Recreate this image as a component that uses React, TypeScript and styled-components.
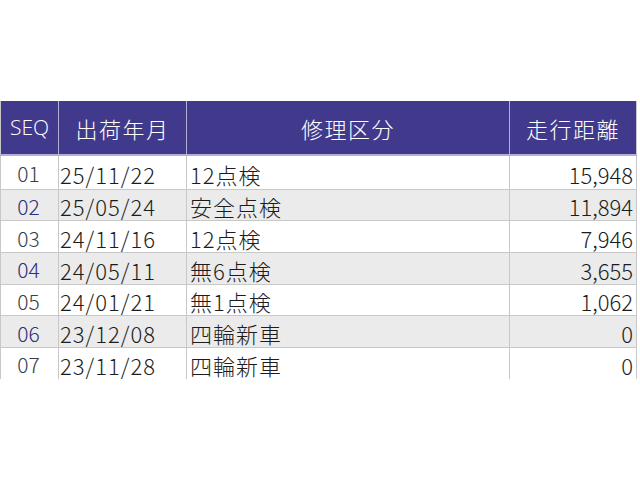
import React from "react";
import styled, { createGlobalStyle } from "styled-components";

const Global = createGlobalStyle`
  html, body { margin: 0; padding: 0; background: #ffffff; }
  body { font-family: "Noto Sans CJK JP", "Liberation Sans", sans-serif; }
`;

const Page = styled.div`
  padding-top: 101px;
`;

const Frame = styled.div`
  width: 637px;
  height: 278px;
  overflow: hidden;
`;

const COLS = "58px 128px 323px 128px";

const HeaderRow = styled.div`
  display: grid;
  grid-template-columns: ${COLS};
  height: 53px;
  background: #413a8c;
  border-bottom: 2px solid #b3afda;
`;

const HeadCell = styled.div<{ $small?: boolean }>`
  display: flex;
  align-items: center;
  justify-content: center;
  color: #ffffff;
  line-height: 1;
  font-weight: 300;
  font-size: ${(p) => (p.$small ? "21px" : "22px")};
  letter-spacing: ${(p) => (p.$small ? "0" : "1.5px")};
  font-family: ${(p) =>
    p.$small ? '"Open Sans", "Liberation Sans", sans-serif' : '"Noto Sans CJK JP", sans-serif'};
  border-left: 1px solid #b3afda;
  &:first-child { border-left-color: #c8c8c8; }
  &:last-child { border-right: 1px solid #c8c8c8; }
`;

const Row = styled.div<{ $alt: boolean; $h: number }>`
  display: grid;
  grid-template-columns: ${COLS};
  height: ${(p) => p.$h}px;
  box-sizing: border-box;
  background: ${(p) => (p.$alt ? "#ebebeb" : "#ffffff")};
  border-bottom: 1px solid #c8c8c8;
`;

const Cell = styled.div<{ $align: "left" | "center" | "right" }>`
  display: flex;
  align-items: center;
  justify-content: ${(p) =>
    p.$align === "left" ? "flex-start" : p.$align === "right" ? "flex-end" : "center"};
  padding: 3px ${(p) => (p.$align === "right" ? "3px" : "0")} 0
    ${(p) => (p.$align === "left" ? "1px" : "0")};
  font-size: 22px;
  line-height: 1;
  font-weight: 300;
  color: #1c1c1c;
  border-left: 1px solid #c8c8c8;
  white-space: nowrap;
  &:last-child { border-right: 1px solid #c8c8c8; }
`;

const SeqCell = styled(Cell)<{ $alt: boolean }>`
  font-size: 21px;
  padding-right: 2px;
  color: ${(p) => (p.$alt ? "#2e2e7a" : "#3c3c48")};
`;

const DateCell = styled(Cell)`
  letter-spacing: 1px;
`;

const TextCell = styled(Cell)`
  padding-left: 3px;
  letter-spacing: 1px;
`;

const rows = [
  ["01", "25/11/22", "12点検", "15,948"],
  ["02", "25/05/24", "安全点検", "11,894"],
  ["03", "24/11/16", "12点検", "7,946"],
  ["04", "24/05/11", "無6点検", "3,655"],
  ["05", "24/01/21", "無1点検", "1,062"],
  ["06", "23/12/08", "四輪新車", "0"],
  ["07", "23/11/28", "四輪新車", "0"],
];

export default function App() {
  return (
    <Page>
      <Global />
      <Frame>
        <HeaderRow>
          <HeadCell $small>SEQ</HeadCell>
          <HeadCell>出荷年月</HeadCell>
          <HeadCell>修理区分</HeadCell>
          <HeadCell>走行距離</HeadCell>
        </HeaderRow>
        {rows.map((r, i) => (
          <Row key={r[0]} $alt={i % 2 === 1} $h={i === 0 ? 33.5 : 31.7}>
            <SeqCell $align="center" $alt={i % 2 === 1}>{r[0]}</SeqCell>
            <DateCell $align="left">{r[1]}</DateCell>
            <TextCell $align="left">{r[2]}</TextCell>
            <Cell $align="right">{r[3]}</Cell>
          </Row>
        ))}
      </Frame>
    </Page>
  );
}
